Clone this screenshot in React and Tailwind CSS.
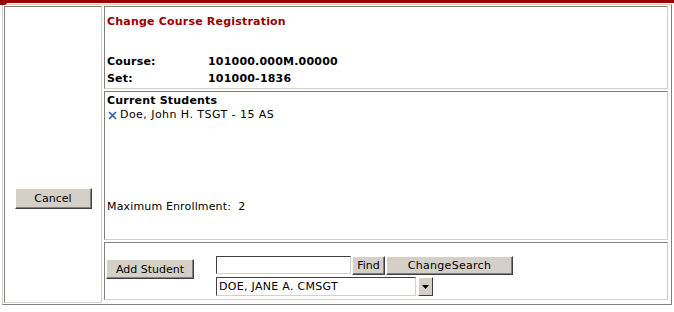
import React from "react";

const font = { fontFamily: '"DejaVu Sans", Verdana, sans-serif' };

const Btn = ({ children, className = "" }) => (
  <button
    className={`bg-[#d4d0c8] text-black text-[11px] leading-none border border-t-white border-l-white border-r-[#404040] border-b-[#404040] shadow-[inset_-1px_-1px_0_#808080] ${className}`}
  >
    {children}
  </button>
);

const cell = "border border-t-[#808080] border-l-[#808080] border-r-[#d4d0c8] border-b-[#d4d0c8] bg-white";

export default function App() {
  return (
    <div className="w-[674px] h-[312px] bg-white relative text-black" style={font}>
      <div className="h-[3px] bg-[#990000]" />
      <div className="absolute left-0 top-0 w-[7px] h-[5px] bg-[#990000] rounded-br-[3px]" />

      <div className="ml-[2px] mt-[1px] w-[670px] h-[301px] border border-t-[#d4d0c8] border-l-[#d4d0c8] border-r-[#808080] border-b-[#808080] p-px flex gap-[2px]">
        {/* left column */}
        <div className={`${cell} w-[98px] h-[297px] flex justify-center pt-[181px]`}>
          <Btn className="w-[77px] h-[21px]">Cancel</Btn>
        </div>

        {/* right column */}
        <div className="flex flex-col gap-[2px] w-[564px]">
          <div className={`${cell} h-[83px] pl-[2px] pt-[8px] text-[11px] font-bold leading-[16px] tracking-[0.2px]`}>
            <div className="text-[#990000] leading-[13px]">Change Course Registration</div>
            <div className="mt-[26px] flex">
              <span className="w-[101px]">Course:</span>
              <span>101000.000M.00000</span>
            </div>
            <div className="flex leading-[17px]">
              <span className="w-[101px]">Set:</span>
              <span>101000-1836</span>
            </div>
          </div>

          <div className={`${cell} h-[149px] pl-[2px] pt-[2px] text-[11px] leading-[14px] flex flex-col`}>
            <div className="font-bold tracking-[0.2px]">Current Students</div>
            <div className="flex items-center gap-[3px]">
              <svg width="9" height="9" viewBox="0 0 9 9" className="ml-px">
                <path d="M1 1 L8 8 M8 1 L1 8" stroke="#2a5db0" strokeWidth="1.6" />
              </svg>
              <span className="tracking-[0.45px]">Doe, John H. TSGT - 15 AS</span>
            </div>
            <div className="mt-[78px] tracking-[0.15px]">Maximum Enrollment:&nbsp; 2</div>
          </div>

          <div className={`${cell} h-[58px] flex items-start`}>
            <Btn className="mt-[16px] ml-[1px] w-[88px] h-[20px]">Add Student</Btn>
            <div className="ml-[22px] mt-[13px] flex flex-col gap-[2px]">
              <div className="flex gap-px">
                <input
                  className="w-[135px] h-[18px] bg-white border border-t-[#404040] border-l-[#404040] border-r-[#d4d0c8] border-b-[#d4d0c8] outline-none"
                  style={font}
                />
                <Btn className="w-[33px] h-[19px]">Find</Btn>
                <Btn className="w-[127px] h-[19px] tracking-[0.3px]">ChangeSearch</Btn>
              </div>
              <div className="flex gap-[2px] items-start">
                <div className="w-[200px] h-[19px] border border-t-[#404040] border-l-[#404040] border-r-[#d4d0c8] border-b-[#d4d0c8] text-[11px] leading-[17px] pl-[2px] tracking-[0.3px]">
                  DOE, JANE A. CMSGT
                </div>
                <div className="w-[15px] h-[19px] bg-[#d4d0c8] border border-t-white border-l-white border-r-[#404040] border-b-[#404040] flex items-center justify-center">
                  <svg width="7" height="4" viewBox="0 0 7 4">
                    <path d="M0 0 H7 L3.5 4 Z" fill="#000" />
                  </svg>
                </div>
              </div>
            </div>
          </div>
        </div>
      </div>
    </div>
  );
}
